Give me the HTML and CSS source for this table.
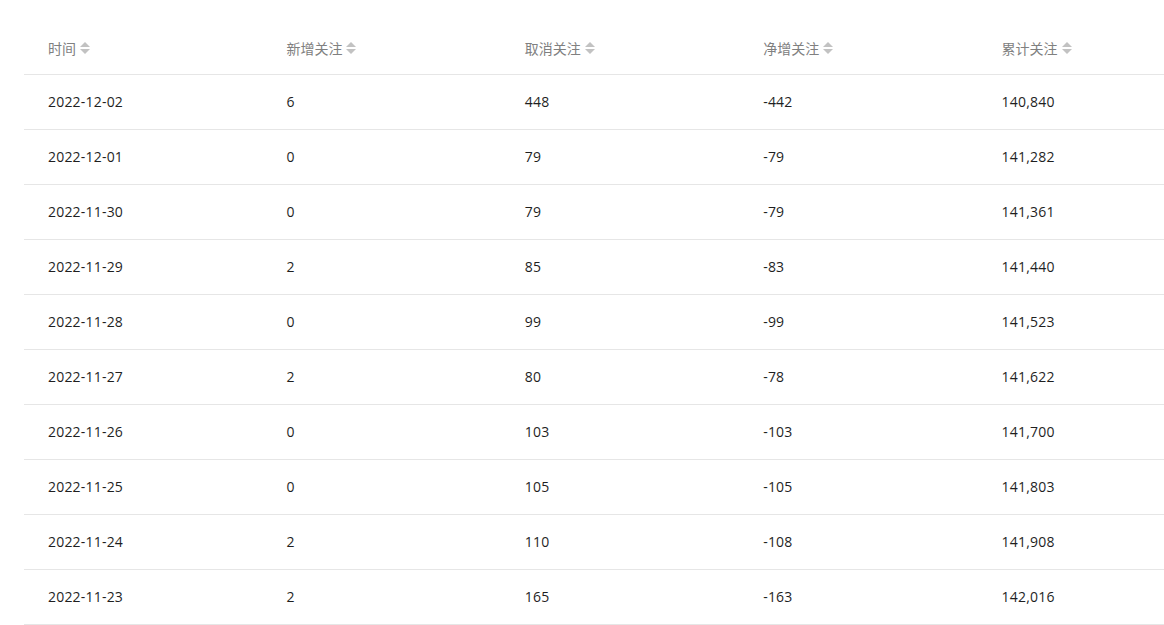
FILE: index.html
```html
<!DOCTYPE html>
<html lang="zh">
<head>
<meta charset="utf-8">
<link rel="stylesheet" href="styles.css">
</head>
<body>
<div class="wrap">
<table class="data">
<thead>
<tr>
<th><span class="th">时间<span class="sort"><i class="up"></i><i class="down"></i></span></span></th>
<th><span class="th">新增关注<span class="sort"><i class="up"></i><i class="down"></i></span></span></th>
<th><span class="th">取消关注<span class="sort"><i class="up"></i><i class="down"></i></span></span></th>
<th><span class="th">净增关注<span class="sort"><i class="up"></i><i class="down"></i></span></span></th>
<th><span class="th">累计关注<span class="sort"><i class="up"></i><i class="down"></i></span></span></th>
</tr>
</thead>
<tbody>
<tr><td>2022-12-02</td><td>6</td><td>448</td><td>-442</td><td>140,840</td></tr>
<tr><td>2022-12-01</td><td>0</td><td>79</td><td>-79</td><td>141,282</td></tr>
<tr><td>2022-11-30</td><td>0</td><td>79</td><td>-79</td><td>141,361</td></tr>
<tr><td>2022-11-29</td><td>2</td><td>85</td><td>-83</td><td>141,440</td></tr>
<tr><td>2022-11-28</td><td>0</td><td>99</td><td>-99</td><td>141,523</td></tr>
<tr><td>2022-11-27</td><td>2</td><td>80</td><td>-78</td><td>141,622</td></tr>
<tr><td>2022-11-26</td><td>0</td><td>103</td><td>-103</td><td>141,700</td></tr>
<tr><td>2022-11-25</td><td>0</td><td>105</td><td>-105</td><td>141,803</td></tr>
<tr><td>2022-11-24</td><td>2</td><td>110</td><td>-108</td><td>141,908</td></tr>
<tr><td>2022-11-23</td><td>2</td><td>165</td><td>-163</td><td>142,016</td></tr>
</tbody>
</table>
</div>
</body>
</html>
```
FILE: styles.css
```css
html, body {
  margin: 0;
  padding: 0;
  background: #fff;
  overflow: hidden;
}
body {
  font-family: "Open Sans", "Noto Sans CJK SC", sans-serif;
  font-size: 14px;
  color: #222;
}
.wrap {
  padding: 22px 0 0 24px;
}
.data {
  width: 1192px;
  border-collapse: collapse;
  table-layout: fixed;
}
.data th, .data td {
  text-align: left;
  padding: 0 0 0 24px;
  border-bottom: 1px solid #e6e6e6;
}
.data th {
  height: 52px;
  font-weight: normal;
  color: #808080;
  font-size: 14px;
}
.data td {
  height: 52px;
  padding-bottom: 2px;
  color: #1f1f1f;
  letter-spacing: 0.2px;
}
.th {
  display: inline-flex;
  align-items: center;
  gap: 4px;
}
.sort {
  display: inline-flex;
  flex-direction: column;
  gap: 2px;
}
.sort i {
  display: block;
  width: 0;
  height: 0;
  border-left: 5.5px solid transparent;
  border-right: 5.5px solid transparent;
}
.sort .up { border-bottom: 5px solid #c2c2c2; }
.sort .down { border-top: 5px solid #c2c2c2; }
```
